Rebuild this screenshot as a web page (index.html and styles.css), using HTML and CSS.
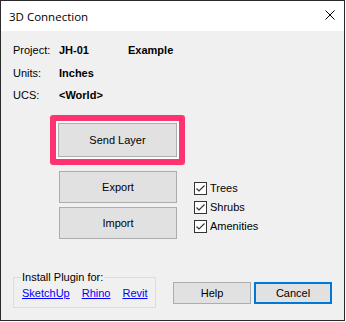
FILE: index.html
```html
<!DOCTYPE html>
<html lang="en">
<head>
  <meta charset="UTF-8">
  <title>3D Connection</title>
  <link rel="stylesheet" href="styles.css">
</head>
<body>
  <div class="window">
    <div class="titlebar">
      <span class="title">3D Connection</span>
      <svg class="close" width="10" height="10" viewBox="0 0 10 10">
        <path d="M0.5 0.5 L9.5 9.5 M9.5 0.5 L0.5 9.5" stroke="#000" stroke-width="1" fill="none"/>
      </svg>
    </div>

    <div class="content">
      <div class="info">
        <span>Project:</span><b>JH-01</b><b>Example</b>
        <span>Units:</span><b>Inches</b><span></span>
        <span>UCS:</span><b>&lt;World&gt;</b><span></span>
      </div>

      <div class="highlight">
        <button type="button" class="btn btn-send">Send Layer</button>
      </div>

      <div class="lower">
        <div class="actions">
          <button type="button" class="btn btn-tall">Export</button>
          <button type="button" class="btn btn-tall">Import</button>
        </div>
        <div class="checks">
          <label class="check"><span class="box"><svg width="11" height="11" viewBox="0 0 11 11"><path d="M1.5 5.5 L4 8 L9.5 2.5" stroke="#333" stroke-width="1.2" fill="none"/></svg></span>Trees</label>
          <label class="check"><span class="box"><svg width="11" height="11" viewBox="0 0 11 11"><path d="M1.5 5.5 L4 8 L9.5 2.5" stroke="#333" stroke-width="1.2" fill="none"/></svg></span>Shrubs</label>
          <label class="check"><span class="box"><svg width="11" height="11" viewBox="0 0 11 11"><path d="M1.5 5.5 L4 8 L9.5 2.5" stroke="#333" stroke-width="1.2" fill="none"/></svg></span>Amenities</label>
        </div>
      </div>

      <div class="footer">
        <fieldset class="plugins">
          <legend>Install Plugin for:</legend>
          <div class="links">
            <a href="#">SketchUp</a>
            <a href="#">Rhino</a>
            <a href="#">Revit</a>
          </div>
        </fieldset>
        <div class="dialog-buttons">
          <button type="button" class="btn btn-small">Help</button>
          <button type="button" class="btn btn-small btn-default">Cancel</button>
        </div>
      </div>
    </div>
  </div>
</body>
</html>
```

FILE: styles.css
```css
body {
  margin: 0;
  background: #fff;
}

.window {
  width: 345px;
  height: 321px;
  box-sizing: border-box;
  border: 1px solid #2b2b2b;
  background: #f0f0f0;
  display: flex;
  flex-direction: column;
  font-family: "Liberation Sans", Arial, sans-serif;
  font-size: 11px;
  color: #000;
}

.titlebar {
  height: 30px;
  background: #fff;
  display: flex;
  align-items: center;
  justify-content: space-between;
  padding: 0 9px 0 8px;
  flex-shrink: 0;
}

.title {
  font-family: "Open Sans", "Noto Sans", sans-serif;
  font-size: 11.5px;
  margin-top: 1px;
}

.close {
  display: block;
  margin-top: -2px;
}

.content {
  flex: 1;
  display: flex;
  flex-direction: column;
  padding: 8px 0 12px 12px;
}

.info {
  display: grid;
  grid-template-columns: 46px 69px auto;
  grid-auto-rows: 22.5px;
  align-items: center;
}

.info b {
  font-weight: bold;
}

.highlight {
  align-self: flex-start;
  margin: 8px 0 0 37px;
  border: 6px solid #ff3370;
  border-radius: 3px;
  padding: 2px;
  background: #fbfbfb;
}

.btn {
  font-family: "Liberation Sans", Arial, sans-serif;
  font-size: 11px;
  color: #000;
  background: #e1e1e1;
  border: 1px solid #adadad;
  padding: 0;
  margin: 0;
  display: block;
}

.btn-send {
  width: 119px;
  height: 34px;
}

.lower {
  display: flex;
  margin-top: 6px;
  padding-left: 46px;
}

.actions {
  display: flex;
  flex-direction: column;
  gap: 4px;
}

.btn-tall {
  width: 118px;
  height: 32px;
}

.checks {
  margin-left: 17px;
  padding-top: 8px;
  display: flex;
  flex-direction: column;
}

.check {
  display: flex;
  align-items: center;
  height: 19px;
}

.box {
  width: 11px;
  height: 11px;
  border: 1px solid #333;
  background: #fff;
  margin-right: 3px;
  display: flex;
}

.footer {
  margin-top: auto;
  display: flex;
  justify-content: space-between;
  align-items: flex-end;
  padding-right: 12px;
}

.plugins {
  width: 143px;
  box-sizing: border-box;
  margin: 0;
  padding: 0 7px 7px 7px;
  border: 1px solid #dcdcdc;
}

.plugins legend {
  padding: 0 1px;
  line-height: 13px;
}

.links {
  display: flex;
  gap: 12px;
  padding-left: 1px;
  margin-top: 3px;
  line-height: 13px;
}

.links a {
  color: #0000ff;
  text-decoration: underline;
}

.dialog-buttons {
  display: flex;
  gap: 3px;
  margin-bottom: 4px;
}

.btn-small {
  width: 78px;
  height: 22px;
}

.btn-default {
  border: 2px solid #0078d7;
}
```
